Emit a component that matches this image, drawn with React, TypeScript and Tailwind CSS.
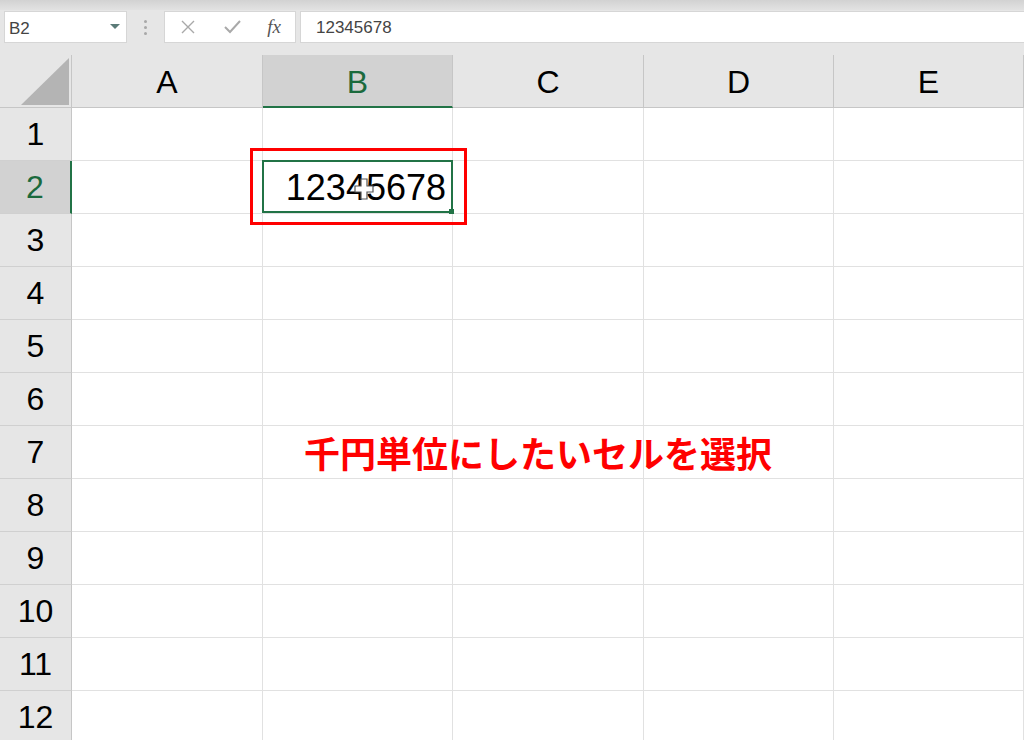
import React from "react";

const cols = ["A", "B", "C", "D", "E"];
const colW = ["191px", "190px", "191px", "190px", "1fr"];
const rows = [1, 2, 3, 4, 5, 6, 7, 8, 9, 10, 11, 12];

export default function App() {
  return (
    <div
      className="w-[1024px] h-[740px] overflow-hidden bg-white flex flex-col"
      style={{ fontFamily: '"Liberation Sans", Arial, sans-serif' }}
    >
      {/* formula bar */}
      <div className="h-[55px] shrink-0 bg-[#e6e6e6] flex flex-col">
        <div className="h-[10px] bg-gradient-to-b from-[#d2d2d2] to-[#e2e2e2]" />
        <div className="flex items-start pt-[1px] pl-[4px]">
          <div className="w-[123px] h-[32px] bg-white border border-[#d6d6d6] flex items-center justify-between pl-[4px] pr-[6px]">
            <span className="text-[17px] text-[#444] mt-[4px]">B2</span>
            <svg width="10" height="6" viewBox="0 0 10 6">
              <path d="M0 0 L10 0 L5 5 Z" fill="#5b7b78" />
            </svg>
          </div>
          <div className="w-[37px] h-[32px] flex flex-col items-center justify-center gap-[3px]">
            <div className="w-[3px] h-[3px] rounded-full bg-[#a8a8a8]" />
            <div className="w-[3px] h-[3px] rounded-full bg-[#a8a8a8]" />
            <div className="w-[3px] h-[3px] rounded-full bg-[#a8a8a8]" />
          </div>
          <div className="w-[132px] h-[32px] bg-white border border-[#d6d6d6] flex items-center">
            <div className="w-[44px] flex justify-center ml-[1px]">
              <svg width="14" height="14" viewBox="0 0 14 14">
                <path d="M1 1 L13 13 M13 1 L1 13" stroke="#a9a9a9" strokeWidth="1.4" />
              </svg>
            </div>
            <div className="w-[44px] flex justify-center">
              <svg width="17" height="14" viewBox="0 0 17 14">
                <path d="M1 7 L6 12 L16 1" stroke="#a9a9a9" strokeWidth="2" fill="none" />
              </svg>
            </div>
            <div className="w-[40px] flex justify-center">
              <span
                className="italic text-[19px] text-[#555]"
                style={{ fontFamily: '"Liberation Serif", "Times New Roman", serif' }}
              >
                fx
              </span>
            </div>
          </div>
          <div className="ml-[4px] flex-1 h-[32px] bg-white border border-[#d6d6d6] border-r-0 flex items-center pl-[15px]">
            <span className="text-[17px] text-[#444] mt-[1px]">12345678</span>
          </div>
        </div>
      </div>

      {/* grid */}
      <div
        className="grid relative"
        style={{
          gridTemplateColumns: `72px ${colW.join(" ")}`,
          gridTemplateRows: `53px repeat(12, 53px)`,
        }}
      >
        {/* corner */}
        <div className="bg-[#e6e6e6] border-r border-b border-[#c6c6c6] relative flex items-end justify-end pr-[2px] pb-[2px]">
          <svg width="48" height="47" viewBox="0 0 48 47">
            <path d="M48 0 L48 47 L0 47 Z" fill="#b4b4b4" />
          </svg>
        </div>
        {cols.map((c) => {
          const sel = c === "B";
          return (
            <div
              key={c}
              className={
                sel
                  ? "bg-[#d2d2d2] border-r border-[#c6c6c6] border-b-2 border-b-[#217346] flex items-center justify-center pt-[3px] text-[32px] text-[#1b6a3d]"
                  : "bg-[#e6e6e6] border-r border-b border-[#c6c6c6] flex items-center justify-center pt-[2px] text-[32px] text-black"
              }
            >
              {c}
            </div>
          );
        })}
        {rows.map((r) => (
          <React.Fragment key={r}>
            <div
              className={
                r === 2
                  ? "bg-[#d2d2d2] border-r-2 border-r-[#217346] border-b border-[#d0d0d0] flex items-center justify-center text-[32px] text-[#1b6a3d]"
                  : "bg-[#e6e6e6] border-r border-b border-[#d0d0d0] border-r-[#c6c6c6] flex items-center justify-center text-[32px] text-black"
              }
            >
              {r}
            </div>
            {cols.map((c) => {
              if (c === "B" && r === 2) {
                return (
                  <div
                    key={c}
                    className="border-r border-b border-[#e1e1e1] relative"
                  >
                    <div className="absolute left-[-1px] top-[-1px] right-[-1px] bottom-[0px] border-2 border-[#217346] flex items-center justify-end pr-[5px] z-10">
                      <span className="text-[36px] text-black leading-none mt-[2px]">12345678</span>
                      <div className="absolute right-[-3px] bottom-[-3px] w-[5px] h-[5px] bg-[#217346]" />
                      {/* cursor */}
                      <svg
                        className="absolute left-[90px] top-[16px]"
                        width="20"
                        height="22"
                        viewBox="0 0 20 22"
                      >
                        <path
                          d="M7 1 H13 V8 H19 V14 H13 V21 H7 V14 H1 V8 H7 Z"
                          fill="#ffffff"
                          stroke="#555"
                          strokeWidth="1.2"
                        />
                      </svg>
                    </div>
                  </div>
                );
              }
              if (c === "B" && r === 7) {
                return (
                  <div
                    key={c}
                    className="border-r border-b border-[#e1e1e1] relative overflow-visible"
                  >
                    <span
                      className="absolute left-[41px] top-[8px] whitespace-nowrap z-10 font-bold text-[36px] leading-none text-[#ff0000]"
                      style={{ fontFamily: '"Noto Sans CJK JP", "Noto Sans", sans-serif' }}
                    >
                      千円単位にしたいセルを選択
                    </span>
                  </div>
                );
              }
              return <div key={c} className="border-r border-b border-[#e1e1e1]" />;
            })}
          </React.Fragment>
        ))}
        {/* red annotation box */}
        <div className="absolute left-[250px] top-[93px] w-[217px] h-[77px] border-[3px] border-[#ff0000] z-20 pointer-events-none" />
      </div>
    </div>
  );
}
